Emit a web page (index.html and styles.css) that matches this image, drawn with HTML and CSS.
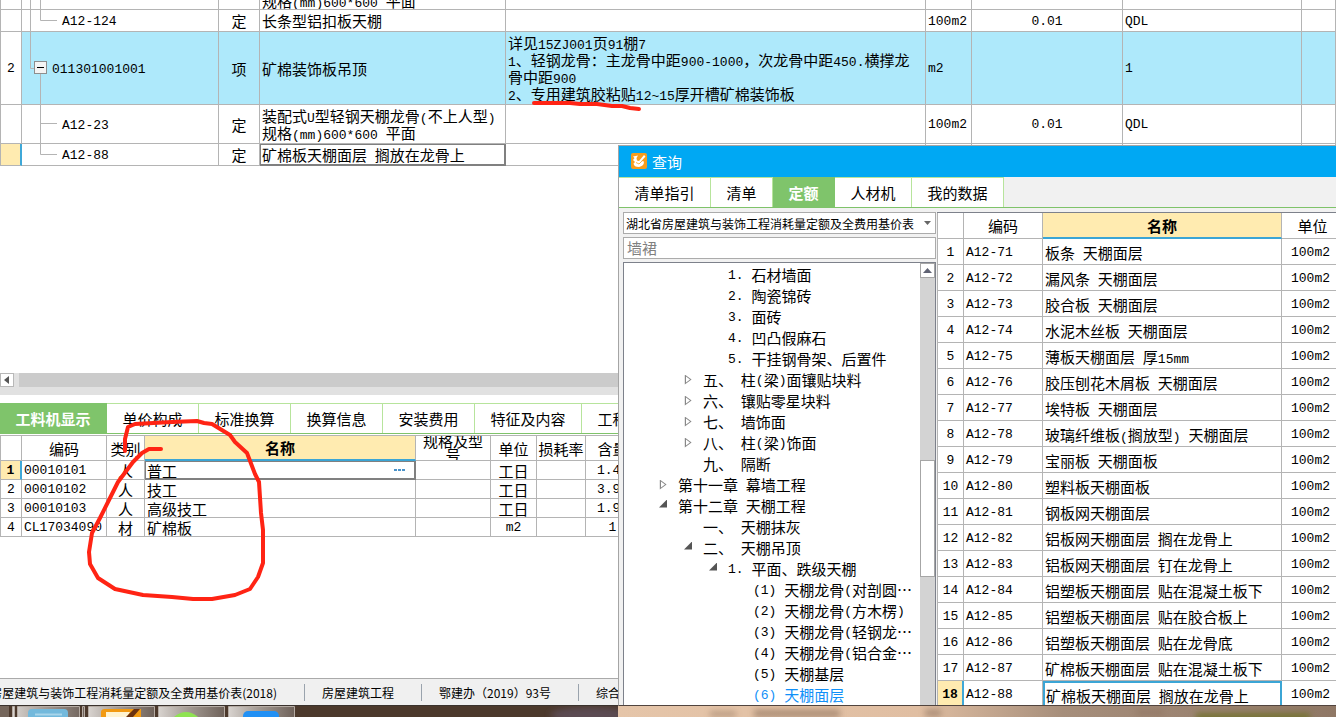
FILE: index.html
```html
<!DOCTYPE html>
<html lang="zh-CN">
<head>
<meta charset="utf-8">
<title>查询</title>
<link rel="stylesheet" href="styles.css">
</head>
<body>
<div class="desktop">
  <main class="app">
    <section class="bill">
      <table class="grid bill-grid">
        <colgroup><col class="c22"><col class="c197"><col class="c41"><col class="c246"><col class="c420"><col class="c46"><col class="c151"><col class="c179"><col></colgroup>
        <tbody>
          <tr class="h10"><td></td><td class="tree-cell"><div class="branch"><svg width="39" height="9"><path d="M8.5 0V9M18.5 0V9"/></svg></div></td><td></td><td><div class="cut"><span>规格<span class="m">(mm)600*600 </span>平面</span></div></td><td></td><td></td><td></td><td></td><td></td></tr>
          <tr class="h22"><td></td><td class="tree-cell"><div class="branch"><svg width="39" height="21"><path d="M8.5 0V21M18.5 0V10.5H35"/></svg><span class="m">A12-124</span></div></td><td class="mid">定</td><td>长条型铝扣板天棚</td><td></td><td class="m">100m2</td><td class="m mid">0.01</td><td class="m">QDL</td><td></td></tr>
          <tr class="h73 picked"><td class="m mid">2</td><td class="tree-cell"><div class="branch"><svg width="29" height="72"><path d="M8.5 0V36.5H13M18.5 42V72"/><rect class="box" x="12.500" y="29.500" width="12" height="12"/><path class="minus" d="M15 35.500H22"/></svg><span class="m">011301001001</span></div></td><td class="mid">项</td><td>矿棉装饰板吊顶</td><td class="note">详见<span class="m">15ZJ001</span>页<span class="m">91</span>棚<span class="m">7</span><br><span class="m">1</span>、轻钢龙骨：主龙骨中距<span class="m">900-1000</span>，次龙骨中距<span class="m">450.</span>横撑龙<br>骨中距<span class="m">900</span><br><span class="m">2</span>、专用建筑胶粘贴<span class="m">12~15</span>厚开槽矿棉装饰板</td><td class="m">m2</td><td></td><td class="m">1</td><td></td></tr>
          <tr class="h39"><td></td><td class="tree-cell"><div class="branch"><svg width="39" height="38"><path d="M18.5 0V38M18.5 18.500H35"/></svg><span class="m">A12-23</span></div></td><td class="mid">定</td><td>装配式<span class="m">U</span>型轻钢天棚龙骨<span class="m">(</span>不上人型<span class="m">)</span><br>规格<span class="m">(mm)600*600 </span>平面</td><td></td><td class="m">100m2</td><td class="m mid">0.01</td><td class="m">QDL</td><td></td></tr>
          <tr class="h22"><td class="here"></td><td class="tree-cell"><div class="branch"><svg width="39" height="21"><path d="M18.500 0V10.500H35"/></svg><span class="m">A12-88</span></div></td><td class="mid">定</td><td class="focus">矿棉板天棚面层<span class="m"> </span>搁放在龙骨上</td><td></td><td class="m">100m2</td><td></td><td></td><td></td></tr>
        </tbody>
      </table>
    </section>

    <div class="hscroll">
      <button class="hbtn" aria-label="向左滚动"><svg width="12" height="12"><path d="M8 2V10L3 6z" fill="#555"/></svg></button>
      <div class="hthumb"></div>
    </div>

    <section class="detail">
      <nav class="tabs low">
        <button class="tab on">工料机显示</button><button class="tab">单价构成</button><button class="tab">标准换算</button><button class="tab">换算信息</button><button class="tab">安装费用</button><button class="tab wide">特征及内容</button><button class="tab t62">工程</button>
      </nav>
      <table class="grid parts">
        <colgroup><col class="c22"><col class="c85"><col class="c38"><col class="c271"><col class="c75"><col class="c46"><col class="c49"><col class="c54"><col></colgroup>
        <thead><tr class="h26"><th></th><th>编码</th><th>类别</th><th class="hot">名称</th><th><div class="two">规格及型号</div></th><th>单位</th><th>损耗率</th><th>含量</th><th></th></tr></thead>
        <tbody>
          <tr class="h19"><td class="m here mid">1</td><td class="m">00010101</td><td class="mid">人</td><td class="focus"><div class="pick">普工<button class="more" aria-label="更多"><svg width="12" height="3"><path d="M0 0h3v2h-3zM4 0h3v2h-3zM8 0h3v2h-3z" fill="#4a92c8"/></svg></button></div></td><td></td><td class="mid">工日</td><td></td><td class="m amount">1.4</td><td></td></tr>
          <tr class="h19"><td class="m mid">2</td><td class="m">00010102</td><td class="mid">人</td><td>技工</td><td></td><td class="mid">工日</td><td></td><td class="m amount">3.9</td><td></td></tr>
          <tr class="h19"><td class="m mid">3</td><td class="m">00010103</td><td class="mid">人</td><td>高级技工</td><td></td><td class="mid">工日</td><td></td><td class="m amount">1.9</td><td></td></tr>
          <tr class="h19"><td class="m mid">4</td><td class="m">CL17034090</td><td class="mid">材</td><td>矿棉板</td><td></td><td class="mid m">m2</td><td></td><td class="m mid">1</td><td></td></tr>
        </tbody>
      </table>
    </section>

    <footer class="status">
      <span class="lib">房屋建筑与装饰工程消耗量定额及全费用基价表(2018)</span>
      <span class="item">房屋建筑工程</span>
      <span class="item">鄂建办（2019）93号</span>
      <span class="item">综合</span>
    </footer>
  </main>

  <div class="taskbar">
    <svg width="100%" height="11">
      <defs>
        <linearGradient id="btn" x2="1" y2="0"><stop offset="0" stop-color="#d8d3cf"/><stop offset=".45" stop-color="#a39a93"/><stop offset="1" stop-color="#6f625a"/></linearGradient>
        <linearGradient id="wall" x2="1" y2="0"><stop offset="0" stop-color="#e5c5a9"/><stop offset=".42" stop-color="#e0bea2"/><stop offset=".62" stop-color="#a68e7b"/><stop offset="1" stop-color="#8f7765"/></linearGradient>
        <filter id="soft" x="-20%" width="140%" y="-100%" height="300%"><feGaussianBlur stdDeviation="3"/></filter>
      </defs>
      <rect width="100%" height="11" fill="#4c392c"/>
      <rect x="0" width="9" height="11" fill="#75665b"/>
      <g fill="url(#btn)" stroke="#b5aba3"><path d="M12.500 12V.5H14.500V12M17.500 12V.5H79.500V12M82.500 12V.5H84.500V12"/><path d="M88.500 12V.5H154.500V12"/><path d="M158.500 12V.5H224.500V12"/><path d="M228.500 12V.5H294.500V12"/></g>
      <rect x="28" y="3" width="40" height="14" rx="4" fill="#73b9dc"/><path d="M35 8.500H62" stroke="#a9d5ea" stroke-width="2"/>
      <path d="M101 11V6Q101 3 105 3H141V11z" fill="#f29a12"/><path d="M106 6H130L127 11H106z" fill="#fff3d0"/><path d="M126 11L134 3H140L133 11z" fill="#6b3210"/>
      <path d="M174 11Q186 1 198 11z" fill="#8fe352"/>
      <rect x="243" y="5" width="36" height="14" rx="5" fill="#2190f4"/>
      <ellipse cx="590" cy="9" rx="40" ry="8" fill="#5c4b52" filter="url(#soft)"/>
      <g><rect x="618" width="718" height="11" fill="url(#wall)"/><g filter="url(#soft)" fill="#8f735f" opacity=".7"><rect x="710" y="6" width="26" height="4"/><rect x="754" y="4" width="86" height="7"/><rect x="925" y="4" width="16" height="6"/><rect x="1136" y="4" width="28" height="5"/></g><rect x="1196" y="7" width="114" height="8" fill="#747331" filter="url(#soft)"/></g>
    </svg>
  </div>

  <section class="dialog">
    <header class="title">
      <svg width="16" height="16" viewBox="0 0 16 16"><rect width="16" height="16" rx="2" fill="#f79d1c"/><path d="M2 3.500L7 2.500L5.500 5L6 7.500L8 8L13 2L14.500 3.500L10.500 8L13 8.500Q13 13 8 14Q3 14 2.500 10.500L4 9L2 7L3.500 5z" fill="#fff"/><path d="M5 9.500L8 11L11 8" stroke="#f6b44c" fill="none"/></svg>
      <span>查询</span>
    </header>
    <nav class="tabs top">
      <button class="tab t92">清单指引</button><button class="tab t62">清单</button><button class="tab on t62">定额</button><button class="tab t77">人材机</button><button class="tab t92">我的数据</button>
    </nav>
    <div class="content">
      <aside class="side">
        <label class="combo"><select aria-label="定额库"><option>湖北省房屋建筑与装饰工程消耗量定额及全费用基价表</option></select><svg width="7" height="4"><path d="M0 0H7L3.500 4z" fill="#666"/></svg></label>
        <input class="search" type="text" aria-label="搜索" placeholder="墙裙">
        <div class="treebox">
          <ul class="tree">
            <li class="l3"><span class="m">1. </span>石材墙面</li>
            <li class="l3"><span class="m">2. </span>陶瓷锦砖</li>
            <li class="l3"><span class="m">3. </span>面砖</li>
            <li class="l3"><span class="m">4. </span>凹凸假麻石</li>
            <li class="l3"><span class="m">5. </span>干挂钢骨架、后置件</li>
            <li class="l2 shut">五、<span class="m"> </span>柱<span class="m">(</span>梁<span class="m">)</span>面镶贴块料</li>
            <li class="l2 shut">六、<span class="m"> </span>镶贴零星块料</li>
            <li class="l2 shut">七、<span class="m"> </span>墙饰面</li>
            <li class="l2 shut">八、<span class="m"> </span>柱<span class="m">(</span>梁<span class="m">)</span>饰面</li>
            <li class="l2">九、<span class="m"> </span>隔断</li>
            <li class="l1 shut">第十一章<span class="m"> </span>幕墙工程</li>
            <li class="l1 open">第十二章<span class="m"> </span>天棚工程</li>
            <li class="l2">一、<span class="m"> </span>天棚抹灰</li>
            <li class="l2 open">二、<span class="m"> </span>天棚吊顶</li>
            <li class="l3 open"><span class="m">1. </span>平面、跌级天棚</li>
            <li class="l4"><span class="m">(1) </span>天棚龙骨<span class="m">(</span>对剖圆⋯</li>
            <li class="l4"><span class="m">(2) </span>天棚龙骨<span class="m">(</span>方木楞<span class="m">)</span></li>
            <li class="l4"><span class="m">(3) </span>天棚龙骨<span class="m">(</span>轻钢龙⋯</li>
            <li class="l4"><span class="m">(4) </span>天棚龙骨<span class="m">(</span>铝合金⋯</li>
            <li class="l4"><span class="m">(5) </span>天棚基层</li>
            <li class="l4 current"><span class="m">(6) </span>天棚面层</li>
          </ul>
          <div class="vscroll"><button class="vbtn" aria-label="向上滚动"><svg width="9" height="5"><path d="M0 5L4.500 0L9 5z" fill="#606374"/></svg></button><div class="vthumb"></div></div>
        </div>
      </aside>
      <div class="results">
        <table class="grid quota">
          <colgroup><col class="c27"><col class="c79"><col><col class="c54"></colgroup>
          <thead><tr class="h26"><th></th><th>编码</th><th class="hot">名称</th><th class="unit">单位</th></tr></thead>
          <tbody>
            <tr><td>1</td><td>A12-71</td><td>板条<span class="m"> </span>天棚面层</td><td>100m2</td></tr>
            <tr><td>2</td><td>A12-72</td><td>漏风条<span class="m"> </span>天棚面层</td><td>100m2</td></tr>
            <tr><td>3</td><td>A12-73</td><td>胶合板<span class="m"> </span>天棚面层</td><td>100m2</td></tr>
            <tr><td>4</td><td>A12-74</td><td>水泥木丝板<span class="m"> </span>天棚面层</td><td>100m2</td></tr>
            <tr><td>5</td><td>A12-75</td><td>薄板天棚面层<span class="m"> </span>厚<span class="m">15mm</span></td><td>100m2</td></tr>
            <tr><td>6</td><td>A12-76</td><td>胶压刨花木屑板<span class="m"> </span>天棚面层</td><td>100m2</td></tr>
            <tr><td>7</td><td>A12-77</td><td>埃特板<span class="m"> </span>天棚面层</td><td>100m2</td></tr>
            <tr><td>8</td><td>A12-78</td><td>玻璃纤维板<span class="m">(</span>搁放型<span class="m">) </span>天棚面层</td><td>100m2</td></tr>
            <tr><td>9</td><td>A12-79</td><td>宝丽板<span class="m"> </span>天棚面板</td><td>100m2</td></tr>
            <tr><td>10</td><td>A12-80</td><td>塑料板天棚面板</td><td>100m2</td></tr>
            <tr><td>11</td><td>A12-81</td><td>钢板网天棚面层</td><td>100m2</td></tr>
            <tr><td>12</td><td>A12-82</td><td>铝板网天棚面层<span class="m"> </span>搁在龙骨上</td><td>100m2</td></tr>
            <tr><td>13</td><td>A12-83</td><td>铝板网天棚面层<span class="m"> </span>钉在龙骨上</td><td>100m2</td></tr>
            <tr><td>14</td><td>A12-84</td><td>铝塑板天棚面层<span class="m"> </span>贴在混凝土板下</td><td>100m2</td></tr>
            <tr><td>15</td><td>A12-85</td><td>铝塑板天棚面层<span class="m"> </span>贴在胶合板上</td><td>100m2</td></tr>
            <tr><td>16</td><td>A12-86</td><td>铝塑板天棚面层<span class="m"> </span>贴在龙骨底</td><td>100m2</td></tr>
            <tr><td>17</td><td>A12-87</td><td>矿棉板天棚面层<span class="m"> </span>贴在混凝土板下</td><td>100m2</td></tr>
            <tr><td class="here">18</td><td>A12-88</td><td class="ring">矿棉板天棚面层<span class="m"> </span>搁放在龙骨上</td><td>100m2</td></tr>
          </tbody>
        </table>
      </div>
    </div>
  </section>

  <svg class="ink" width="700" height="620">
    <path d="M534 103L570 103L580 104L597 104L612 106L622 106L630 108L639 109"/>
    <path d="M125 451L125 439L128 427L135 424L172 422L197 421L204 423L212 424L230 435L235 442L247 453L255 474L259 482L261 513L263 530L263 563L258 577L250 589L235 595L212 599L193 599L172 597L143 595L115 589L98 578L90 564L89 552L92 533L100 518L110 498L118 482L133 462L142 453L149 449L161 449"/>
  </svg>
</div>
</body>
</html>
```

FILE: styles.css
```css
* { box-sizing: border-box; }
body {
  margin: 0;
  background: #fff;
  color: #000;
  font: 15px/17px "Noto Sans CJK SC", sans-serif;
}
button, input, select { font: inherit; color: inherit; margin: 0; padding: 0; border: 0; border-radius: 0; background: none; }
.m { font-family: "Liberation Mono", monospace; font-size: 13px; white-space: pre; }
span.m { line-height: 1px; }

.desktop { position: relative; display: flex; flex-direction: column; height: 100vh; overflow: hidden; }
.app { flex: 1; min-height: 0; display: flex; flex-direction: column; border-bottom: 1px solid #3a322d; }

/* shared grid look */
.grid { width: 100%; table-layout: fixed; border-collapse: separate; border-spacing: 0; }
.grid td, .grid th { padding: 0 0 0 2px; border: solid #b4b4b4; border-width: 0 1px 1px 0; white-space: nowrap; overflow: hidden; font-weight: 400; }
.grid td:first-child, .grid th:first-child { border-left-width: 1px; padding: 0; text-align: center; }
.grid th { padding: 0; text-align: center; }
.grid td.mid { padding: 0; text-align: center; }
.grid td.m:not(:first-child) { padding-top: 2px; line-height: 16px; }
.grid .here { background: #ffebb0; border-right: 2px solid #3fa8d8; font-weight: 700; }
.grid th.hot { background: #ffebb0; border-bottom: 2px solid #3ba5d5; font-weight: 700; }
.grid td.focus { box-shadow: inset 0 0 0 1px #808080; border-color: #808080; }
.c22 { width: 22px; } .c27 { width: 27px; } .c38 { width: 38px; } .c41 { width: 41px; }
.c46 { width: 46px; } .c49 { width: 49px; } .c54 { width: 54px; }
.c75 { width: 75px; } .c79 { width: 79px; } .c85 { width: 85px; } .c151 { width: 151px; }
.c179 { width: 179px; } .c197 { width: 197px; } .c246 { width: 246px; } .c271 { width: 271px; } .c420 { width: 420px; }
.h10 { height: 10px; } .h19 { height: 19px; } .h22 { height: 22px; } .h26 { height: 26px; }
.h39 { height: 39px; } .h73 { height: 73px; }

/* bill of quantities */
.bill { flex: 1; min-height: 0; overflow: hidden; }
.cut { display: flex; align-items: flex-end; height: 9px; overflow: hidden; }
.grid td.tree-cell { padding: 0; }
.branch { display: flex; align-items: center; }
.branch svg { display: block; flex: none; margin-right: 1px; fill: none; stroke: #b4b4b4; }
.branch .m { padding-top: 2px; }
.branch .box { fill: #f4f4f4; stroke: #8e8e8e; stroke-width: 1; }
.branch .minus { stroke: #000; }
.bill-grid .picked td:not(:first-child) { background: #aee9fb; }

.hscroll { display: flex; height: 22px; padding-bottom: 8px; background: #e1e1e1; gap: 5px; }
.hbtn { display: grid; place-items: center; width: 14px; background: #fff; border: 1px solid #b8b8b8; }
.hthumb { flex: 1; background: #cbcbcb; }

/* tab strips */
.tabs { display: flex; border-bottom: 1px solid #7fc36a; }
.tab { display: block; background: #fff; border: solid #b7e49c; border-width: 1px 1px 0 0; flex: none; text-align: center; }
.tab.on { background: #7fc46b; border-color: #7fc46b; color: #fff; font-weight: 700; }
.low { height: 31px; margin-top: 8px; }
.low .tab { width: 92px; }
.low .tab.on { width: 107px; }
.low .tab.wide { width: 107px; }
.low .tab.t62 { width: 62px; }
.detail { height: 283px; }
.parts { margin-top: 1px; }
.parts thead th { border-top: 1px solid #b4b4b4; }
.grid td.amount { padding-left: 11px; }
.two { height: 24px; display: grid; align-content: center; overflow: hidden; line-height: 14px; white-space: normal; padding: 0 5px; }
.pick { display: flex; align-items: center; justify-content: space-between; padding-right: 9px; }
.more { display: grid; place-items: center; height: 12px; }

.status { display: flex; align-items: center; height: 27px; background: #f0f0f0; border-top: 1px solid #aaa; font-size: 12px; white-space: nowrap; overflow: hidden; }
.lib { display: flex; justify-content: flex-end; width: 277px; margin-right: 27px; flex: none; }
.item { padding: 0 27px 0 17px; border-left: 1px solid #9aa3ad; }

.taskbar { height: 11px; flex: none; overflow: hidden; }
.taskbar svg { display: block; }

/* floating query window */
.dialog { position: absolute; left: 618px; right: 0; top: 145px; bottom: 11px; display: flex; flex-direction: column; background: #f1f1f1; border: solid #a5a5a5; border-width: 1px 0 1px 1px; border-bottom-color: #51443e; overflow: hidden; }
.title { display: flex; align-items: center; gap: 5px; height: 31px; flex: none; padding: 0 0 1px 12px; background: #00a8f3; color: #fff; }
.top { height: 31px; flex: none; }
.t62 { width: 62px; } .t77 { width: 77px; } .t92 { width: 92px; }
.content { flex: 1; min-height: 0; display: flex; gap: 1px; padding: 4px 0 0 4px; }
.side { width: 313px; display: flex; flex-direction: column; gap: 3px; }
.combo { display: flex; align-items: center; height: 22px; padding-right: 4px; background: #fff; border: 1px solid #ababab; flex: none; }
.combo select { flex: 1; min-width: 0; appearance: none; font-size: 12px; padding-left: 2px; }
.search { height: 22px; padding: 0 0 2px 3px; background: #fff; border: 1px solid #ababab; flex: none; }
.search::placeholder { color: #808080; opacity: 1; }
.treebox { flex: 1; min-height: 0; display: flex; background: #fff; border: 1px solid #7d818b; border-bottom: 0; overflow: hidden; }
.tree { flex: 1; margin: 0; padding: 1px 0 0; list-style: none; white-space: nowrap; overflow: hidden; }
.tree li { display: flex; align-items: center; height: 21px; }
.tree li .m { padding-top: 2px; }
.tree li::before { content: ""; flex: none; width: 8px; height: 10px; margin-right: 11px; }
.tree .l1 { padding-left: 35px; } .tree .l2 { padding-left: 60px; }
.tree .l3 { padding-left: 85px; } .tree .l4 { padding-left: 110px; }
.tree .shut::before { background: #888; clip-path: polygon(evenodd, 10% 0, 95% 50%, 10% 100%, 10% 0, 25% 20%, 25% 80%, 75% 50%, 25% 20%); }
.tree .open::before { height: 8px; margin-bottom: 4px; background: #555; clip-path: polygon(100% 0, 100% 100%, 0 100%); }
.tree .current { color: #1090f8; }
.vscroll { width: 15px; background: #d3d3d3; display: grid; grid-template-rows: 15px 183fr 117fr 129fr; }
.vbtn { display: grid; place-items: center; background: #fff; border: 1px solid #a6a6a6; }
.vthumb { grid-row: 3; background: #fff; border: 1px solid #a6a6a6; }
.results { flex: 1; min-width: 0; background: #fff; border-top: 1px solid #7d818b; overflow: hidden; }
.quota tbody tr { height: 26px; }
.quota tbody td:not(:nth-child(3)) { font-family: "Liberation Mono", monospace; font-size: 13px; padding-top: 2px; }
.quota tbody td:nth-child(3) { padding-top: 1px; }
.quota td:last-child { padding: 0 0 0 9px; border-right: 0; }
.quota th.unit { border-right: 0; padding-left: 7px; }
.grid td.ring { border: 2px solid #3ba5d5; border-bottom: 0; padding-left: 1px; }

.ink { position: absolute; left: 0; top: 0; pointer-events: none; fill: none; stroke: #ff2414; stroke-width: 4; stroke-linecap: round; stroke-linejoin: round; }
```
